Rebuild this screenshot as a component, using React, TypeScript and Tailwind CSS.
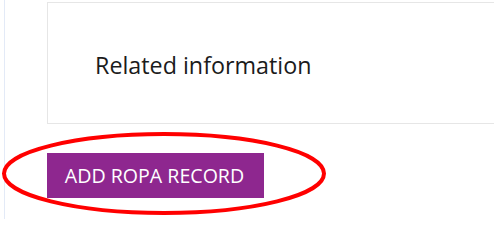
export default function App() {
  return (
    <div className="relative w-[494px] h-[227px] overflow-hidden bg-white" style={{ fontFamily: '"Open Sans", "Noto Sans", sans-serif' }}>
      <div className="ml-[4px] h-[219px] border-l border-[#e3eaf7] pl-[42px] pt-[2px]">
        <div className="w-[600px] h-[122px] border border-[#e6e6e6] bg-white flex items-center pl-[47px]">
          <span className="text-[23.3px] font-medium text-[#1b1b1b] leading-none pt-[6px]">Related information</span>
        </div>
        <button className="mt-[29px] w-[217px] h-[45px] bg-[#8e278f] text-white text-[19.6px] leading-none flex items-center justify-center pr-[2px]">
          ADD ROPA RECORD
        </button>
      </div>
      <svg className="absolute left-0 top-0 pointer-events-none" width="494" height="227">
        <ellipse cx="164" cy="173.5" rx="160" ry="39.5" fill="none" stroke="#ff0000" strokeWidth="4" />
      </svg>
    </div>
  );
}
